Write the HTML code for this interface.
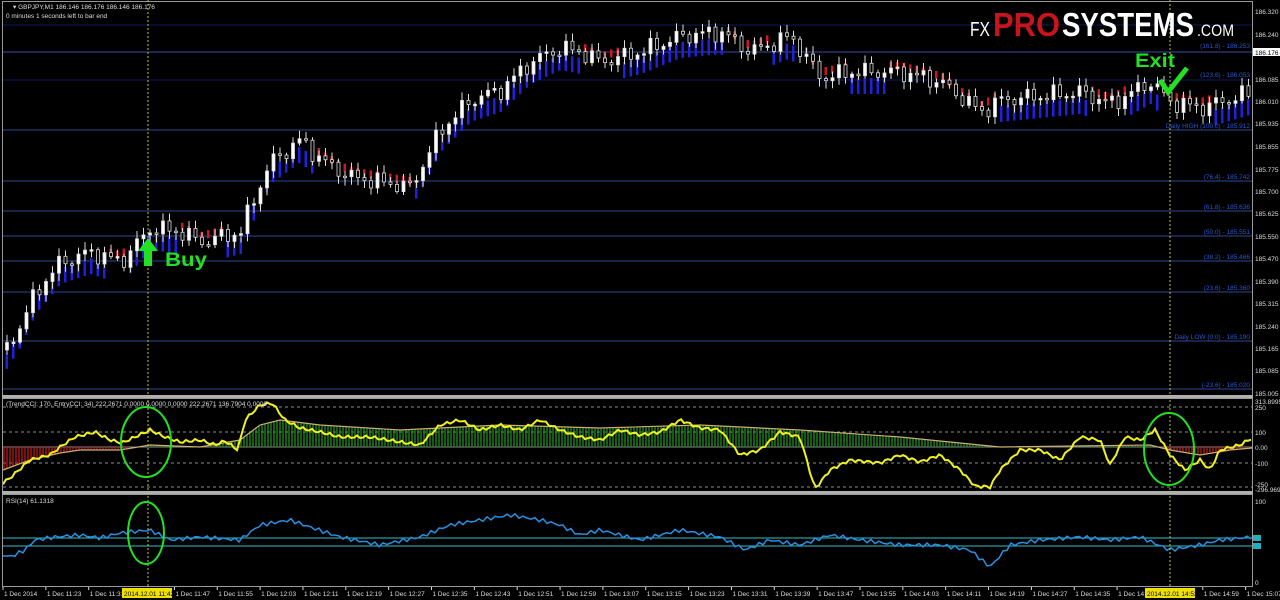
<!DOCTYPE html>
<html><head><meta charset="utf-8"><style>
html,body{margin:0;padding:0;background:#000;width:1280px;height:600px;overflow:hidden}
svg{display:block;font-family:"Liberation Sans",sans-serif}
</style></head><body>
<svg id="s" width="1280" height="600" viewBox="0 0 1280 600" xmlns="http://www.w3.org/2000/svg">
<rect width="1280" height="600" fill="#000"/>
<g id="grid"></g>
<g id="rib"></g>
<g id="cnd"></g>
<g id="ind"></g>
<rect x="2.5" y="1.5" width="1250" height="394" fill="none" stroke="#9a9a9a" stroke-width="1"/>
<rect x="2" y="395" width="1251" height="3" fill="#b0b0b0"/>
<rect x="2.5" y="398.5" width="1250" height="93" fill="none" stroke="#9a9a9a" stroke-width="1"/>
<rect x="2" y="491" width="1251" height="3" fill="#b0b0b0"/>
<rect x="2.5" y="494.5" width="1250" height="92" fill="none" stroke="#9a9a9a" stroke-width="1"/>
<line x1="148" y1="0" x2="148" y2="587" stroke="#c8c040" stroke-dasharray="2,2"/>
<line x1="1170" y1="0" x2="1170" y2="587" stroke="#c8c040" stroke-dasharray="2,2"/>
<g font-size="6.5" fill="#ddd">
<text x="13" y="9">▾ GBPJPY,M1  186.146 186.176 186.146 186.176</text>
<text x="6" y="18">0 minutes 1 seconds left to bar end</text>
<text x="6" y="406">(TrendCCI: 170, EntryCCI: 34)  222.2671 0.0000 0.0000 0.0000 222.2671 136.7904 0.0000</text>
<text x="6" y="503">RSI(14) 61.1318</text>
</g>
<g id="axis" font-size="6.5" fill="#ddd"></g>
<g id="fib" font-size="6.5" fill="#2858d0" text-anchor="end"></g>
<text x="970" y="36" font-size="20" fill="#fff" textLength="20" lengthAdjust="spacingAndGlyphs">FX</text>
<text x="993" y="36" font-size="33" font-weight="bold" fill="#c8141c" textLength="67" lengthAdjust="spacingAndGlyphs">PRO</text>
<text x="1062" y="36" font-size="33" font-weight="bold" fill="#fff" textLength="132" lengthAdjust="spacingAndGlyphs">SYSTEMS</text>
<text x="1197" y="36" font-size="17" fill="#fff" textLength="37" lengthAdjust="spacingAndGlyphs">.COM</text>
<text x="1135" y="67" font-size="19" font-weight="bold" fill="#22e022" textLength="40" lengthAdjust="spacingAndGlyphs">Exit</text>
<path d="M1160 80 L1168 92 L1187 68" fill="none" stroke="#22e022" stroke-width="5"/>
<path d="M148 238 L138 251 L144 251 L144 266 L152 266 L152 251 L158 251 Z" fill="#22e022"/>
<text x="165" y="266" font-size="19" font-weight="bold" fill="#22e022" textLength="42" lengthAdjust="spacingAndGlyphs">Buy</text>
<ellipse cx="146" cy="442" rx="25" ry="35" fill="none" stroke="#22e022" stroke-width="2"/>
<ellipse cx="1169" cy="449" rx="25" ry="36" fill="none" stroke="#22e022" stroke-width="2"/>
<ellipse cx="146" cy="533" rx="18" ry="31" fill="none" stroke="#22e022" stroke-width="2"/>
<g font-size="6.5" fill="#ddd">
<text x="1255" y="14">186.320</text><text x="1255" y="37">186.240</text>
<rect x="1253" y="48" width="27" height="8" fill="#fff"/><text x="1255" y="55" fill="#000">186.176</text>
<text x="1255" y="82">186.085</text><text x="1255" y="104">186.010</text><text x="1255" y="126">185.935</text>
<text x="1255" y="149">185.855</text><text x="1255" y="172">185.775</text><text x="1255" y="194">185.700</text>
<text x="1255" y="216">185.625</text><text x="1255" y="239">185.550</text><text x="1255" y="261">185.470</text>
<text x="1255" y="284">185.390</text><text x="1255" y="306">185.315</text><text x="1255" y="329">185.240</text>
<text x="1255" y="351">185.165</text><text x="1255" y="373">185.085</text><text x="1255" y="396">185.005</text>
<text x="1255" y="404">313.8995</text><text x="1255" y="410">250</text><text x="1255" y="435">100</text>
<text x="1255" y="450">0.00</text><text x="1255" y="466">-100</text><text x="1255" y="487">-250</text><text x="1255" y="492">-296.9692</text>
<text x="1255" y="504">100</text><text x="1255" y="585">0</text>
</g>
<rect x="1253" y="535" width="8" height="6" fill="#20b0c0"/><rect x="1253" y="543" width="8" height="6" fill="#20b0c0"/>
<rect x="122" y="588" width="50" height="10" fill="#f0e000"/><text x="124" y="596" font-size="6.5" fill="#000">2014.12.01 11:42</text>
<rect x="1145" y="588" width="50" height="10" fill="#f0e000"/><text x="1147" y="596" font-size="6.5" fill="#000">2014.12.01 14:53</text>
</svg>
<script>
(function(){
var NS="http://www.w3.org/2000/svg";
function el(p,t,a){var e=document.createElementNS(NS,t);for(var k in a)e.setAttribute(k,a[k]);document.getElementById(p).appendChild(e);return e;}
[[25,"#0a1a60"],[52,"#3050a0"],[80,"#0a1a60"],[130,"#2a4a90"],[181,"#2a4a90"],[211,"#2a4a90"],[236,"#2a4a90"],[261,"#2a4a90"],[292,"#2a4a90"],[341,"#2a4a90"],[389,"#2a4a90"]].forEach(function(g){el("grid","line",{x1:3,x2:1252,y1:g[0],y2:g[0],stroke:g[1],"stroke-width":1});});
[[48,"(161.8) - 186.253"],[77,"(123.6) - 186.053"],[128,"Daily HIGH (100.0) - 185.912"],[179,"(76.4) - 185.742"],[209,"(61.8) - 185.636"],[234,"(50.0) - 185.551"],[259,"(38.2) - 185.466"],[290,"(23.6) - 185.360"],[339,"Daily LOW (0.0) - 185.190"],[387,"(-23.6) - 185.020"]].forEach(function(f){var t=el("fib","text",{x:1250,y:f[0]});t.textContent=f[1];});
[407,432,463,487].forEach(function(y){el("ind","line",{x1:3,x2:1252,y1:y,y2:y,stroke:"#bbb","stroke-dasharray":"3,3","stroke-width":0.8});});
el("ind","line",{x1:3,x2:1252,y1:447,y2:447,stroke:"#888","stroke-width":1});
el("ind","line",{x1:3,x2:1252,y1:538,y2:538,stroke:"#30c0c8","stroke-width":1});
el("ind","line",{x1:3,x2:1252,y1:546,y2:546,stroke:"#30c0c8","stroke-width":1});
function interp(pts,x){for(var i=1;i<pts.length;i++){if(x<=pts[i][0]){var a=pts[i-1],b=pts[i];return a[1]+(b[1]-a[1])*(x-a[0])/(b[0]-a[0]);}}return pts[pts.length-1][1];}
var price=[[4,350],[20,325],[35,292],[60,262],[90,252],[120,262],[150,228],[180,232],[200,242],[240,232],[250,205],[270,162],[300,140],[320,160],[350,177],[380,182],[410,187],[440,130],[470,100],[500,90],[530,62],[560,48],[580,52],[600,62],[640,52],[680,36],[720,32],[750,52],[790,36],[820,78],[850,72],[900,72],[940,82],[980,112],[1000,100],[1040,96],[1080,92],[1110,104],[1150,82],[1170,102],[1200,108],[1252,92]];
var prev=interp(price,4);
for(var x=6;x<1250;x+=6.5){
 var n=Math.sin(x*1.7)*6+Math.sin(x*0.53)*4;
 var c=interp(price,x)+n, o=prev; prev=c;
 var ty=Math.min(o,c),by=Math.max(o,c); if(by-ty<1.5)by=ty+1.5;
 var hi=ty-2-Math.abs(Math.sin(x*2.3))*6, lo=by+2+Math.abs(Math.cos(x*1.9))*6;
 var tr=interp(price,x)-interp(price,x-35);
 var col=tr<0?"#2020e0":"#d01818";
 var ry=tr<0?interp(price,x)+6:interp(price,x)-10;
 el("rib","rect",{x:x-0.5,y:ry,width:2.5,height:tr<0?16:8,fill:col});
 el("cnd","line",{x1:x+1,x2:x+1,y1:hi,y2:lo,stroke:"#ddd","stroke-width":1});
 el("cnd","rect",{x:x-0.5,y:ty,width:3,height:by-ty,fill:c<o?"#fff":"#000",stroke:"#ddd","stroke-width":0.8});
}
var yel=[[3,483],[10,478],[30,460],[50,455],[60,447],[75,437],[95,432],[110,440],[122,443],[135,437],[150,430],[165,437],[180,442],[200,440],[215,445],[225,441],[238,450],[245,420],[260,405],[272,403],[285,420],[300,428],[320,432],[340,437],[370,437],[400,442],[420,445],[440,425],[460,420],[480,430],[500,425],[520,430],[540,420],[560,430],[580,437],[600,440],[620,430],[640,435],[660,432],[680,420],[700,428],[720,430],[740,455],[760,450],[780,432],[800,437],[815,489],[830,470],[850,460],[880,463],[900,455],[920,462],[940,455],[960,470],[975,486],[990,487],[1000,470],[1020,450],[1040,450],[1060,460],[1080,437],[1100,440],[1110,465],[1125,437],[1140,440],[1155,430],[1170,455],[1185,470],[1200,460],[1210,470],[1220,450],[1240,445],[1252,438]];
var tan=[[3,470],[30,460],[60,453],[80,450],[120,450],[150,445],[200,447],[240,440],[260,425],[280,420],[320,425],[400,430],[500,425],[600,428],[700,425],[800,430],[900,437],[980,445],[1000,447],[1150,445],[1170,450],[1200,455],[1230,450],[1252,448]];
for(var x=4;x<1251;x+=3){var t=interp(tan,x);if(Math.abs(t-447)<1)continue;el("ind","line",{x1:x,x2:x,y1:447,y2:t,stroke:t<447?"#209020":"#c01818","stroke-width":1.3});}
function pl(p,c,w){el("ind","polyline",{points:p.map(function(a){return a.join(",")}).join(" "),fill:"none",stroke:c,"stroke-width":w});}
var y2=[];for(var x=3;x<=1252;x+=3)y2.push([x,interp(yel,x)+Math.sin(x*0.7)*1.5]);
pl(tan,"#c8b070",1.2);pl(y2,"#f0f020",2);
var rsi=[[3,555],[10,557],[25,550],[35,540],[55,537],[80,535],[100,538],[120,533],[150,530],[170,540],[200,537],[240,540],[260,525],[290,520],[310,527],[340,537],[380,545],[420,537],[450,525],[480,520],[510,515],[540,520],[560,525],[580,535],[600,530],[640,540],[680,530],[720,537],[745,550],[770,540],[800,545],[830,535],[860,540],[900,545],[940,545],[970,550],[990,567],[1010,545],[1040,540],[1080,537],[1110,540],[1140,537],[1170,550],[1200,545],[1220,540],[1252,537]];
var r2=[];for(var x=3;x<=1252;x+=4)r2.push([x,interp(rsi,x)+Math.sin(x*0.9)*2]);
pl(r2,"#2890e0",1.5);
var labs=["1 Dec 2014","1 Dec 11:23","1 Dec 11:31","","1 Dec 11:47","1 Dec 11:55","1 Dec 12:03","1 Dec 12:11","1 Dec 12:19","1 Dec 12:27","1 Dec 12:35","1 Dec 12:43","1 Dec 12:51","1 Dec 12:59","1 Dec 13:07","1 Dec 13:15","1 Dec 13:23","1 Dec 13:31","1 Dec 13:39","1 Dec 13:47","1 Dec 13:55","1 Dec 14:03","1 Dec 14:11","1 Dec 14:19","1 Dec 14:27","1 Dec 14:35","1 Dec 14:43","","1 Dec 14:59","1 Dec 15:07"];
labs.forEach(function(l,i){if(!l)return;var x=4+i*42.85;el("axis","line",{x1:x-1,x2:x-1,y1:587,y2:590,stroke:"#ddd"});var t=el("axis","text",{x:x,y:596});t.textContent=l;});
})();
</script>
</body></html>
